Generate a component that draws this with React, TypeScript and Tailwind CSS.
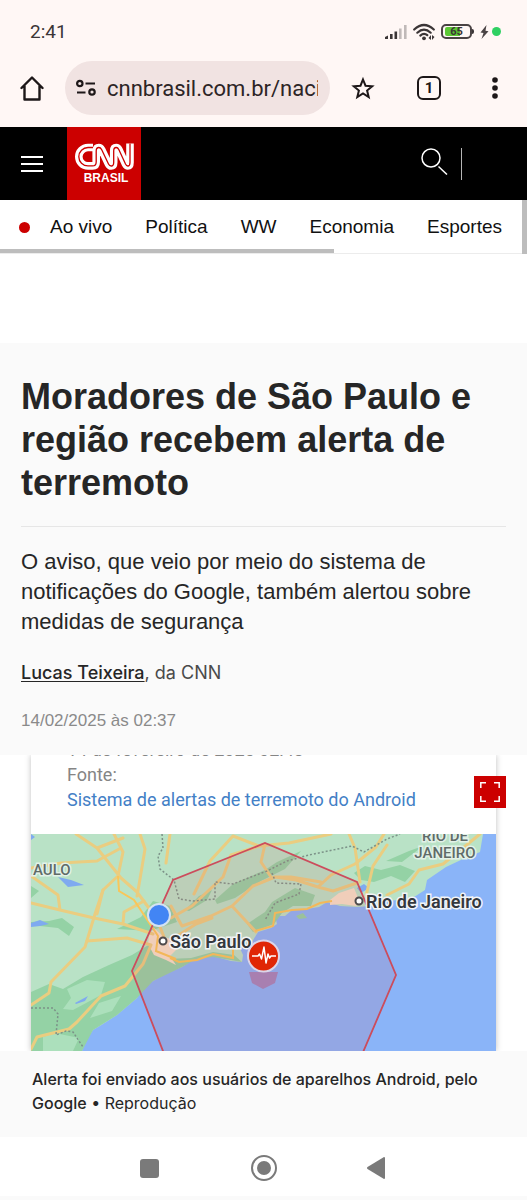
import type { ReactNode } from "react";

const sections = [
  { label: "Ao vivo", live: true },
  { label: "Política" },
  { label: "WW" },
  { label: "Economia" },
  { label: "Esportes" },
];

function StatusBar() {
  return (
    <div className="flex h-[61px] items-center justify-between pl-[30px] pr-[26px] pt-[2px] font-['Roboto',sans-serif] text-[#3b3536]">
      <span className="text-[19px] leading-6">2:41</span>
      <div className="flex items-center gap-[6px]">
        <svg width="22" height="14" viewBox="0 0 22 14" aria-label="Sinal">
          <path d="M0 14v-2l3-1.500V14zM5 9h2.600v5H5zM9.500 6.500h2.600v7.500H9.500z" fill="#3b3536" />
          <path d="M14 3.500h2.600V14H14zM19 0h2.600v14H19z" fill="#c0b9b8" />
        </svg>
        <svg width="22" height="18" viewBox="0 0 22 18" fill="none" aria-label="Wi-Fi">
          <g stroke="#3b3536" strokeWidth="2.200" strokeLinecap="round">
            <path d="M1.200 6.500Q11 -2.500 20.800 6.500" />
            <path d="M4.300 9.700Q11 3.600 17.700 9.700" />
            <path d="M7.300 12.600Q11 9.300 14.300 12.200" />
          </g>
          <circle cx="11" cy="15.300" r="1.900" fill="#3b3536" />
          <path d="M15.500 15l2.500-3v5zM19 12v5l2.500-3z" fill="#3b3536" />
        </svg>
        <div className="flex items-center">
          <div className="relative flex h-[15px] w-[31px] items-center justify-center rounded-[5px] border-2 border-[#4a4344]">
            <span className="absolute inset-y-px left-[2px] w-[15px] rounded-l-[2px] bg-[#5cc834]" />
            <span className="relative text-[11px] font-bold leading-none">65</span>
          </div>
          <span className="h-[5px] w-[2px] rounded-r bg-[#3b3536]" />
        </div>
        <div className="flex items-center gap-[3px]">
          <svg width="9" height="14" viewBox="0 0 9 14" aria-label="Carregando">
            <path d="M6.500 0L.5 7.500l3 .5L1.500 14 8.500 6.300l-3-.5z" fill="#4a4344" />
          </svg>
          <span className="size-[9px] rounded-full bg-[#2fd062]" />
        </div>
      </div>
    </div>
  );
}

function BrowserBar() {
  return (
    <div className="flex items-center gap-[21px] px-5 pb-3 text-[#1d1718]">
      <button type="button" aria-label="Página inicial">
        <svg width="24" height="26" viewBox="0 0 24 26" fill="none" stroke="currentColor" strokeWidth="2.400" strokeLinejoin="round" strokeLinecap="round">
          <path d="M1.500 13L12 2.500 22.500 13M4.500 11v13.500h15V11" />
        </svg>
      </button>
      <div className="flex h-[54px] min-w-0 flex-1 items-center gap-[11px] rounded-full bg-[#f1e3e2] pl-[11px] pr-3">
        <svg className="shrink-0" width="20" height="18" viewBox="0 0 20 18" fill="none" stroke="currentColor" strokeWidth="2.200" aria-hidden="true">
          <circle cx="3.800" cy="4.500" r="2.700" />
          <path d="M9.500 4.500H19M1 13.500h8.500" />
          <circle cx="16" cy="13" r="2.700" />
        </svg>
        <input
          type="text"
          aria-label="Endereço"
          readOnly
          defaultValue="cnnbrasil.com.br/nacional"
          className="w-full min-w-0 bg-transparent pt-[2px] font-['Roboto',sans-serif] text-[22px] leading-8 text-[#2d2526] outline-none"
        />
      </div>
      <div className="flex items-center gap-[42px]">
        <button type="button" aria-label="Favoritar">
          <svg width="24" height="24" viewBox="0 0 24 24" fill="none" stroke="currentColor" strokeWidth="2">
            <path d="M12 3.500l2.500 6.200 6.700.5-5.100 4.300 1.600 6.500L12 17.500 6.300 21l1.600-6.500-5.100-4.300 6.700-.5z" />
          </svg>
        </button>
        <button
          type="button"
          aria-label="Abas abertas"
          className="size-6 rounded-[6px] border-[2px] border-current font-['Roboto',sans-serif] text-[15px] font-bold leading-5"
        >
          1
        </button>
        <button type="button" aria-label="Mais opções">
          <svg width="24" height="24" viewBox="0 0 24 24" fill="currentColor">
            <circle cx="12" cy="4" r="2.800" />
            <circle cx="12" cy="12" r="2.800" />
            <circle cx="12" cy="20" r="2.800" />
          </svg>
        </button>
      </div>
    </div>
  );
}

function Logo() {
  const line =
    "M26 20.500H21a9.200 9.200 0 0 0 0 18.400h4.500q3.700 0 3.700-4V24q0-3.500 2.700-3.500 1.600 0 2.700 2L41.500 37q1 2 2.700 2 2.500 0 2.500-3.500V24q0-3.500 2.500-3.500 1.600 0 2.600 2L58.500 37q1 2 2.300 2 2.200 0 2.200-3.500V16.500";
  return (
    <a href="#" aria-label="CNN Brasil" className="flex h-[73px] w-[74px] flex-col items-center bg-[#cc0000] pt-[14px] text-white">
      <svg width="74" height="32" viewBox="0 14 74 32" fill="none" aria-hidden="true">
        <path d={line} stroke="#fff" strokeWidth="7.600" />
        <path d={line} stroke="#cc0000" strokeWidth="1.300" />
      </svg>
      <span className="pl-1 text-[12px] font-bold leading-[10px]">BRASIL</span>
    </a>
  );
}

function SiteHeader() {
  return (
    <header className="flex items-center bg-black pl-[21px] pr-[65px] text-white">
      <button type="button" aria-label="Menu" className="mr-6 flex w-[22px] flex-col gap-[5px]">
        <span className="h-[2px] bg-white" />
        <span className="h-[2px] bg-white" />
        <span className="h-[2px] bg-white" />
      </button>
      <Logo />
      <button type="button" aria-label="Buscar" className="ml-auto border-r border-[#b5b5b5] pb-[5px] pr-[13px]">
        <svg width="27" height="27" viewBox="0 0 27 27" fill="none" stroke="currentColor" strokeWidth="1.500">
          <circle cx="10" cy="10" r="9" />
          <path d="M17.500 18.500L26 26.500" />
        </svg>
      </button>
    </header>
  );
}

function SectionNav() {
  return (
    <nav className="flex overflow-hidden bg-white">
      <div className="flex min-w-0 flex-1 flex-col border-b border-[#ececec]">
        <ul className="flex h-[49px] items-center gap-[33px] whitespace-nowrap pl-[19px] pt-[5px] text-[19px] leading-6 text-[#111]">
          {sections.map((item) => (
            <li key={item.label}>
              <a href="#" className="flex items-center">
                {item.live && <span className="mr-5 size-[11px] rounded-full bg-[#cc0000]" />}
                {item.label}
              </a>
            </li>
          ))}
        </ul>
        <div className="h-1 w-[64%] bg-[#bdbdbd]" />
      </div>
      <div className="w-[5px] bg-[#bdbdbd]" />
    </nav>
  );
}

function AlertMap() {
  return (
    <svg
      viewBox="0 0 465 217"
      preserveAspectRatio="xMidYMid slice"
      className="block h-[217px] w-full"
      fontFamily="Roboto, sans-serif"
      role="img"
      aria-label="Mapa do alerta entre São Paulo e Rio de Janeiro"
    >
      <rect width="465" height="217" fill="#8ab4f8" />
      {/* Land */}
      <path
        d="M0 0H452L449 18 432 25 415 33 396 46 394 56 380 65 355 67 340 72 326 73 309 72 296 68 288 73 276 75 261 76 254 82 244 82 246 90 240 94 227 98 221 108 208 112 212 121 211 128 200 127 182 122 165 124 151 133 136 139 122 147 112 153 106 164 86 181 72 190 62 196 56 205 51 217H0Z"
        fill="#b9e2c6"
      />
      {/* Forest */}
      <g fill="#94d2a5">
        <path d="M0 158L18 150 32 155 52 143 78 131 101 121 119 110 135 125 160 124 182 118 203 121 211 128 182 123 165 125 151 133 122 147 106 164 86 181 62 196 51 217H0Z" />
        <path d="M86 95L110 83 122 67 139 72 146 88 119 97ZM154 76L168 62 181 56 176 66 158 77ZM184 66L202 50 234 36 246 28 270 17 254 35 230 47 204 64 186 70Z" />
        <path d="M323 39L334 32 350 36 369 31 384 37 374 48 360 42 343 48 330 46ZM355 27L378 17 392 12 371 28ZM241 68L264 54 284 61 280 72 262 72 251 79 243 90 222 98 216 90 234 78ZM0 88L18 87 31 84 43 93 38 102 27 94 0 91ZM0 52l8 5-8 7Z" />
        <path d="M265 82l7-3 4 5-8 1Z" />
      </g>
      <path d="M36 155l20-9 18 2-4 13-28 15-10-1 8-11zM68 169l22-7-9 15-22 7zM12 203l12-4 24 5-6 13H12z" fill="#ace0bc" />
      <path d="M27 43l13 3 13 5-16 2zM0 89l9-3 9 4-9 2-9 1zM44 169l13-7-3 5-9 3zM0 0l4 3-4 3zM326 54l7-4 5 4-8 5z" fill="#7faaf0" />
      {/* Urban areas */}
      <path d="M118 102l5-8 10 9 10 3 4 8-8 8 6 9-10-5-12-5-6-11zM299 66l9-7 15-5 5 12-3 6-14-2-12 1z" fill="#f5e0c8" />
      {/* Roads */}
      <g fill="none" stroke="#eacd80" strokeWidth="3" strokeLinejoin="round" strokeLinecap="round">
        <path d="M45 0L66 14 90 44 106 58 126 85 133 103M66 14L92 4M66 27L30 29 0 34M66 27L90 14M83 0L92 18 87 42M109 0L114 15 109 45 106 62M139 0L135 29M87 42L72 56 64 80 54 113 20 148 18 159 0 171" />
        <path d="M0 42L27 61 29 76 63 84 92 90 122 100M29 76L0 69M56 107L96 104 120 111M120 111L112 130 94 152 70 162 46 188 38 195 6 203 0 215M72 56L66 80M92 90L93 78 113 67" />
        <path d="M140 84L161 72 192 43 200 21 222 14 234 10M163 60L179 27 202 2M202 2L228 12 258 9 300 0M140 72L151 92 180 82 201 72 222 52 244 43 265 46 287 53 302 57 326 49M234 10L230 28 240 43M201 72L225 98M140 106L165 90 181 84M287 53L300 41 324 30 345 13 353 0M335 62L342 32 356 11M244 43L260 43 290 48M318 0L324 14 329 48M356 61L378 50 388 36 412 30 432 14 449 0" />
      </g>
      <path d="M139 124l9 4 18-2 16-6 20 4v-10M224 97l18-5 2-13 17-3 15-1 13-6 12-2M87 42l1 15 15 9 24 36-2 15 20 8" fill="none" stroke="#f9c659" strokeWidth="2" />
      {/* State borders */}
      <g fill="none" stroke="#7c9288" strokeWidth="1.500" strokeDasharray="2 2">
        <path d="M131 0L132 14 127 22 129 35 143 46 148 65 162 67 184 65 184 48 202 50 220 43 236 37 256 27 278 21 321 12 333 18 356 5 369 0" />
        <path d="M241 39L245 49 270 50 268 60 244 69 234 86M0 174H22L27 180 25 201 35 197 42 198 52 213" />
      </g>
      {/* Alert area */}
      <path d="M137 230L101 137 142 46 234 9 326 48 365 141 327 230Z" fill="#cd585a" fillOpacity="0.130" stroke="#cc4c5c" strokeWidth="1.800" />
      <path d="M218 138h29l-3 11-12 6-11-6z" fill="#a87fb0" />
      <g fill="#5f6b68" stroke="#e3f2e8" strokeWidth="3" paintOrder="stroke" fontWeight="500" fontSize="15">
        <text x="2" y="41">AULO</text>
        <text x="414" y="7" textAnchor="middle">RIO DE</text>
        <text x="414" y="24" textAnchor="middle">JANEIRO</text>
      </g>
      <g fill="#fff" stroke="#4d4a4c" strokeWidth="2">
        <circle cx="132" cy="107" r="3.500" />
        <circle cx="328" cy="67" r="3.500" />
      </g>
      <g fill="#34383e" stroke="#f2f4f6" strokeWidth="3" paintOrder="stroke" fontWeight="600" fontSize="18">
        <text x="139" y="114">São Paulo</text>
        <text x="335" y="74">Rio de Janeiro</text>
      </g>
      <circle cx="128" cy="81" r="11" fill="#4285f4" stroke="#d3e2f3" strokeWidth="2" />
      <circle cx="232.500" cy="122" r="15.500" fill="#e02605" stroke="#dcd5e8" strokeWidth="2" />
      <path d="M221 122h6l1.500-2 2 5 2.500-12 2 16 2-9 1.500 4 1.500-2h5" fill="none" stroke="#fff" strokeWidth="1.500" strokeLinejoin="round" />
    </svg>
  );
}

function AlertFigure() {
  return (
    <figure className="text-[#262626]">
      <div className="relative overflow-hidden bg-white px-[31px]">
        <div className="shadow-[0_0_6px_rgba(0,0,0,0.25)]">
          <div className="flex h-[79px] flex-col justify-end overflow-hidden whitespace-nowrap pb-[22px] pl-9 font-['Roboto',sans-serif] text-[18px] leading-[25px] text-[#858585]">
            <span>14 de fevereiro de 2025 02:43</span>
            <span>Fonte:</span>
            <a href="#" className="text-[#4380c6]">Sistema de alertas de terremoto do Android</a>
          </div>
          <AlertMap />
        </div>
        <button type="button" aria-label="Ampliar imagem" className="absolute right-[21px] top-[21px] flex size-8 items-center justify-center bg-[#cc0000] text-white">
          <svg width="20" height="20" viewBox="0 0 20 20" fill="none" stroke="currentColor" strokeWidth="1.500">
            <path d="M.8 6V.8H6M14 .8h5.200V6M19.200 14v5.200H14M6 19.200H.8V14" />
          </svg>
        </button>
      </div>
      <figcaption className="px-8 pb-[22px] pt-4 font-['Inter',sans-serif] text-[16px] leading-6">
        <span className="font-medium">Alerta foi enviado aos usuários de aparelhos Android, pelo Google</span> • Reprodução
      </figcaption>
    </figure>
  );
}

function NavButton({ label, children }: { label: string; children: ReactNode }) {
  return (
    <button type="button" aria-label={label} className="flex w-[114px] items-center justify-center">
      {children}
    </button>
  );
}

function SystemNav() {
  return (
    <div className="flex h-16 justify-center border-b-[5px] border-[#fafafa] bg-white pt-[3px] text-[#7a7a7a]">
      <NavButton label="Recentes">
        <span className="size-[19px] rounded-[3px] bg-current" />
      </NavButton>
      <NavButton label="Início">
        <span className="flex size-[26px] items-center justify-center rounded-full border-2 border-current">
          <span className="size-[14px] rounded-full bg-current" />
        </span>
      </NavButton>
      <NavButton label="Voltar">
        <svg width="22" height="22" viewBox="0 0 22 22" fill="currentColor">
          <path d="M17 0q1 0 1 1v20q0 1-1 1L.5 12q-1-1 0-2z" />
        </svg>
      </NavButton>
    </div>
  );
}

export default function App() {
  return (
    <div className="bg-[#fafafa] font-['Liberation_Sans',Arial,sans-serif]">
      <div className="bg-[#fff7f5]">
        <StatusBar />
        <BrowserBar />
      </div>
      <SiteHeader />
      <SectionNav />
      <main>
        <div className="h-[89px] bg-white" />
        <article>
          <div className="px-[21px] pb-[22px] pt-8 text-[#262626]">
            <h1 className="border-b border-[#e6e6e6] pb-[22px] text-[36px] font-bold leading-[43px]">
              Moradores de São Paulo e região recebem alerta de terremoto
            </h1>
            <p className="mt-5 text-[22px] leading-[30px]">
              O aviso, que veio por meio do sistema de notificações do Google, também alertou sobre medidas de segurança
            </p>
            <p className="mt-6 font-['Inter',sans-serif] text-[18px] leading-6 text-[#4a4a4a]">
              <a href="#" className="font-medium text-[#262626] underline underline-offset-2">Lucas Teixeira</a>, da CNN
            </p>
            <time dateTime="2025-02-14T02:37" className="mt-6 block text-[17px] leading-6 text-[#8a8a8a]">
              14/02/2025 às 02:37
            </time>
          </div>
          <AlertFigure />
        </article>
      </main>
      <SystemNav />
    </div>
  );
}
